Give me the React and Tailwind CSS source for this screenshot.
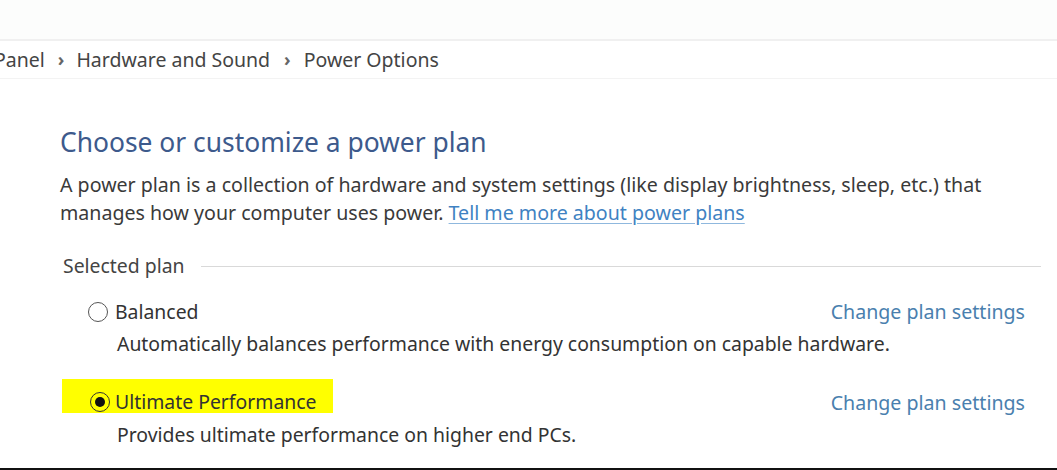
export default function App() {
  const f = { fontFamily: '"Noto Sans", "Open Sans", sans-serif' };
  return (
    <div className="w-[1057px] h-[470px] bg-white overflow-hidden flex flex-col text-[#333]" style={f}>
      <div className="h-[41px] shrink-0 bg-[#fcfdfc] border-b-2 border-[#f0f0f0]" />
      <div className="h-[38px] shrink-0 flex items-center -ml-[6px] text-[19.5px] text-[#444] border-b border-[#f3f3f3]">
        <span>Panel</span>
        <span className="ml-[13px] mr-[12px] text-[18px] font-bold text-[#666]">›</span>
        <span>Hardware and Sound</span>
        <span className="ml-[14px] mr-[13px] text-[18px] font-bold text-[#666]">›</span>
        <span>Power Options</span>
      </div>
      <div className="flex-1 flex flex-col pl-[60px] pr-[32px]">
        <h1 className="mt-[46px] text-[26.4px] leading-[34px] text-[#3d5a8c]">Choose or customize a power plan</h1>
        <p className="mt-[12px] text-[19.6px] leading-[28px] text-[#3a3a3a] whitespace-nowrap">
          A power plan is a collection of hardware and system settings (like display brightness, sleep, etc.) that
          <br />
          manages how your computer uses power.{' '}
          <span className="text-[#3f82c2] underline decoration-[#8fb8de] underline-offset-[3px]">Tell me more about power plans</span>
        </p>
        <div className="mt-[26px] flex items-center gap-[16px] pl-[3px]">
          <span className="text-[19.4px] leading-[26px] text-[#444]">Selected plan</span>
          <div className="flex-1 h-px bg-[#d9d9d9] mr-[-16px]" />
        </div>
        <div className="mt-[20px] h-[26px] flex items-center pl-[28px]">
          <span className="w-[20px] h-[20px] rounded-full border-[1.5px] border-[#555] bg-white shrink-0" />
          <span className="ml-[7px] text-[19.4px] leading-[26px] text-[#333]">Balanced</span>
          <span className="ml-auto text-[19.6px] leading-[26px] text-[#4a7fae]">Change plan settings</span>
        </div>
        <div className="mt-[6px] pl-[57px] text-[19.4px] leading-[26px] text-[#333] whitespace-nowrap">
          Automatically balances performance with energy consumption on capable hardware.
        </div>
        <div className="mt-[22px] flex items-start">
          <div className="h-[34px] w-[271px] bg-[#ffff00] flex items-center pt-[12px] pl-[28px] ml-[2px]">
            <span className="w-[20px] h-[20px] rounded-full border-[1.5px] border-[#333] flex items-center justify-center shrink-0">
              <span className="w-[10px] h-[10px] rounded-full bg-[#111]" />
            </span>
            <span className="ml-[5px] text-[19.4px] leading-[22px] text-[#333] whitespace-nowrap">Ultimate Performance</span>
          </div>
          <span className="ml-auto mt-[11px] text-[19.6px] leading-[26px] text-[#4a7fae]">Change plan settings</span>
        </div>
        <div className="mt-[6px] pl-[57px] text-[19.4px] leading-[26px] text-[#333] whitespace-nowrap">
          Provides ultimate performance on higher end PCs.
        </div>
      </div>
      <div className="h-[2px] shrink-0 bg-[#111]" />
    </div>
  );
}
